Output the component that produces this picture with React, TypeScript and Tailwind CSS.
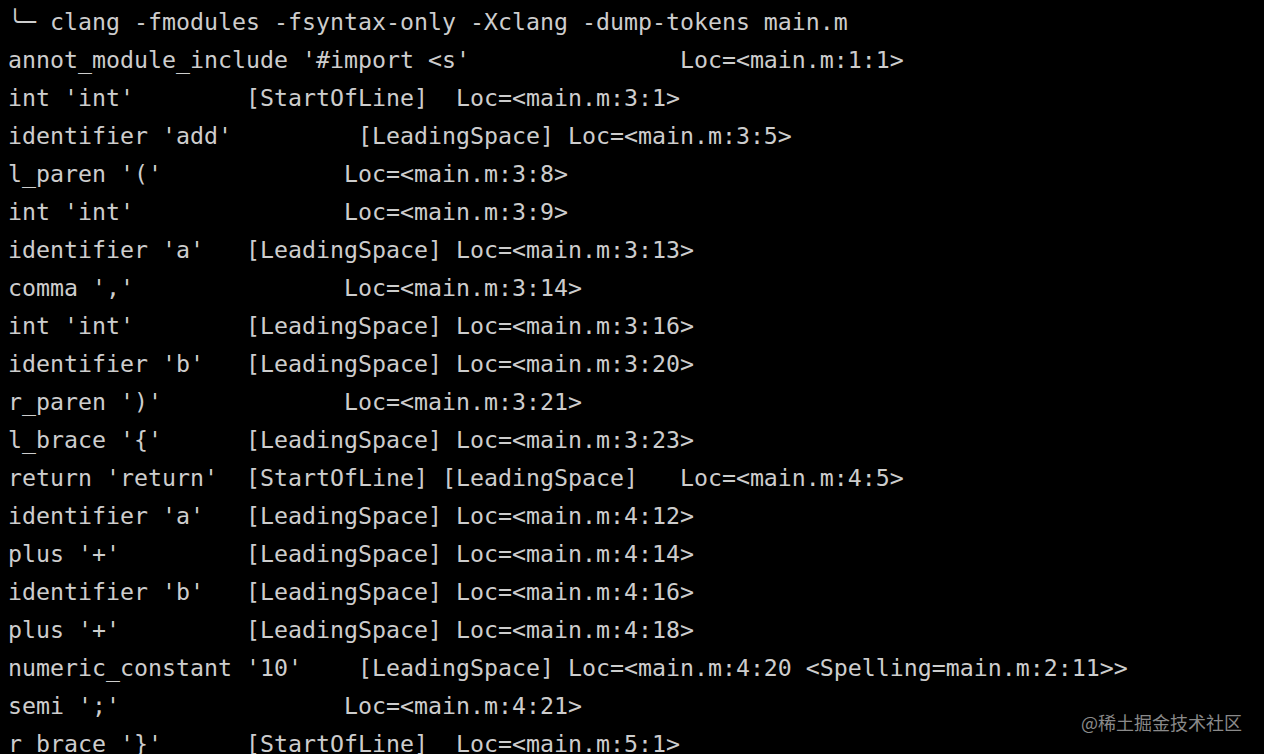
import React from 'react';

// clang -dump-tokens separates its columns with tabs; expand them to 8-wide stops
const expandTabs = (line: string) => {
    let out = '';
    for (const ch of line) {
        if (ch === '\t') {
            const n = 8 - (out.length % 8);
            out += ' '.repeat(n);
        } else {
            out += ch;
        }
    }
    return out;
};

const TOKENS = [
    "annot_module_include '#import <s'\t\tLoc=<main.m:1:1>",
    "int 'int'\t [StartOfLine]\tLoc=<main.m:3:1>",
    "identifier 'add'\t [LeadingSpace]\tLoc=<main.m:3:5>",
    "l_paren '('\t\tLoc=<main.m:3:8>",
    "int 'int'\t\tLoc=<main.m:3:9>",
    "identifier 'a'\t [LeadingSpace]\tLoc=<main.m:3:13>",
    "comma ','\t\tLoc=<main.m:3:14>",
    "int 'int'\t [LeadingSpace]\tLoc=<main.m:3:16>",
    "identifier 'b'\t [LeadingSpace]\tLoc=<main.m:3:20>",
    "r_paren ')'\t\tLoc=<main.m:3:21>",
    "l_brace '{'\t [LeadingSpace]\tLoc=<main.m:3:23>",
    "return 'return'\t [StartOfLine] [LeadingSpace]\tLoc=<main.m:4:5>",
    "identifier 'a'\t [LeadingSpace]\tLoc=<main.m:4:12>",
    "plus '+'\t [LeadingSpace]\tLoc=<main.m:4:14>",
    "identifier 'b'\t [LeadingSpace]\tLoc=<main.m:4:16>",
    "plus '+'\t [LeadingSpace]\tLoc=<main.m:4:18>",
    "numeric_constant '10'\t [LeadingSpace]\tLoc=<main.m:4:20 <Spelling=main.m:2:11>>",
    "semi ';'\t\tLoc=<main.m:4:21>",
    "r_brace '}'\t [StartOfLine]\tLoc=<main.m:5:1>",
];

const App: React.FC = () => {
    return (
        <div className="relative w-[1264px] h-[754px] overflow-hidden bg-black">
            <div className="pt-[3px] pl-[8px] font-['DejaVu_Sans_Mono',monospace] text-[23.26px] leading-[38px] text-[#cdcdcd] whitespace-pre">
                <div>{'╰─ clang -fmodules -fsyntax-only -Xclang -dump-tokens main.m'}</div>
                {TOKENS.map((t, i) => (
                    <div key={i}>{expandTabs(t)}</div>
                ))}
            </div>

            {/* watermark */}
            <div className="absolute right-[22px] bottom-[23px] font-['Noto_Sans_CJK_SC',sans-serif] text-[18px] leading-none text-[#8a8a8a]">
                @稀土掘金技术社区
            </div>
        </div>
    );
};

export default App;
